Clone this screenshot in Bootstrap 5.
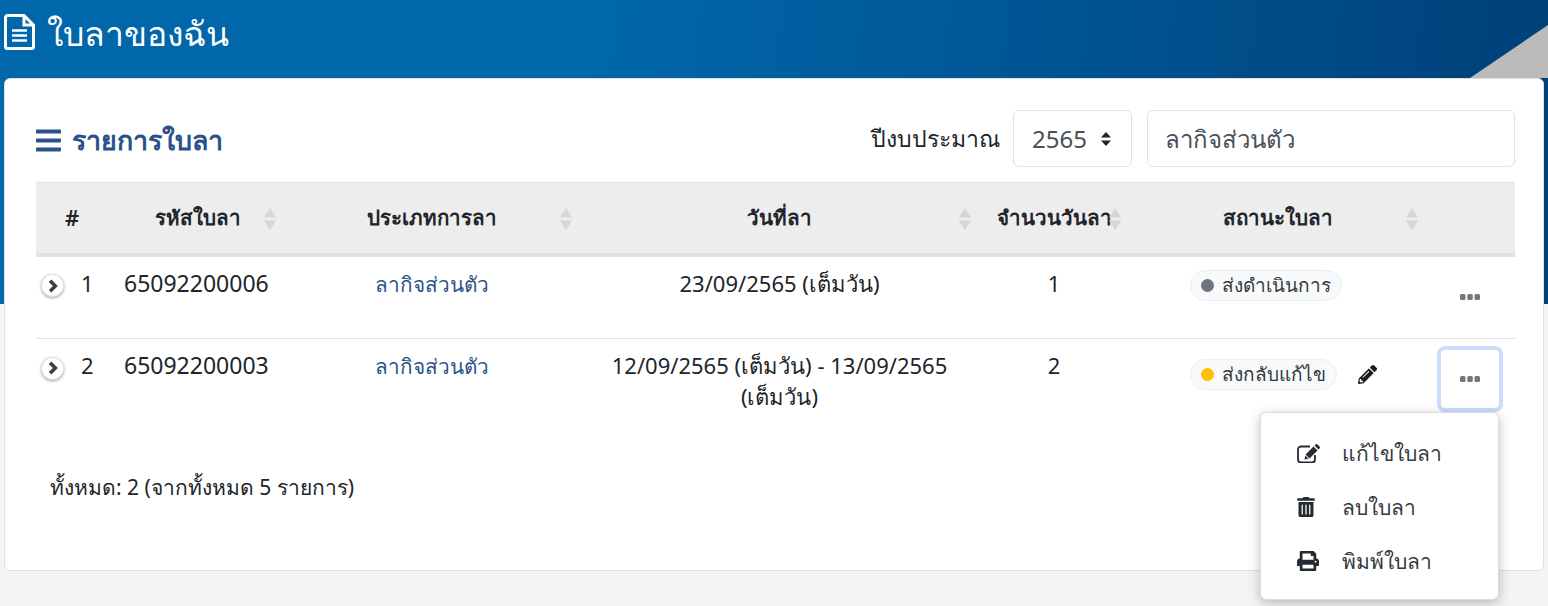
<!DOCTYPE html>
<html lang="th">
<head>
    <meta charset="UTF-8">
    <meta name="viewport" content="width=device-width, initial-scale=1.0">
    <title>ใบลาของฉัน</title>
    <link href="https://cdn.jsdelivr.net/npm/bootstrap@5.3.0/dist/css/bootstrap.min.css" rel="stylesheet">
    <style>
        body {
            background-color: #f3f4f6;
            font-family: "Noto Sans", "Open Sans", sans-serif;
            font-size: 22px;
            color: #212529;
            min-height: 606px;
        }
        .top-band {
            height: 304px;
            padding: 13px 4px 0;
            background: linear-gradient(98deg, #0067ab 0%, #0067ab 38%, #003f77 100%);
            color: #fff;
            position: relative;
        }
        .top-band::after {
            content: "";
            position: absolute;
            top: 25px;
            right: 0;
            width: 78px;
            height: 53px;
            background: #bbbbbb;
            clip-path: polygon(100% 0, 100% 100%, 0 100%);
        }
        .page-title {
            font-size: 33.7px;
            font-weight: 400;
            line-height: 36px;
            margin: 0;
        }
        .page-title svg { width: 31px; height: 36px; margin-right: 12px; }
        .page-title span { padding-top: 2px; }
        .main-card {
            margin: -226px 4px 0;
            height: 493px;
            padding: 31px 28px 0 31px;
            border-radius: 6px;
            border-color: #dfdfdf;
        }
        .list-title {
            font-size: 26.8px;
            font-weight: 600;
            color: #2a5288;
            margin: 4px 0 0;
        }
        .list-title svg { width: 25px; height: 29px; fill: #2a5288; margin-right: 11px; }
        .year-label { margin-right: 13px; font-size: 23px; }
        .year-select {
            width: 119px;
            height: 57px;
            font-size: 24px;
            padding: 0 18px;
            color: #495057;
            border-radius: 6px;
            margin-right: 15px;
            display: flex;
            align-items: center;
            justify-content: space-between;
        }
        .year-select svg { width: 14px; height: 16px; fill: #212529; }
        .search-box {
            width: 368px;
            height: 57px;
            font-size: 24px;
            padding: 0 17px;
            color: #495057;
            border-radius: 6px;
        }
        .leave-table {
            table-layout: fixed;
            width: 1479px;
            margin: 15px 0 0;
        }
        .leave-table th {
            height: 72px;
            background: #ededee;
            border-top: 1px solid #e2e2e2;
            border-bottom: 4px solid #dee2e6;
            font-size: 20.5px;
            font-weight: 600;
            text-align: center;
            vertical-align: middle;
            padding: 0 8px 0 16px;
            position: relative;
            white-space: nowrap;
        }
        .leave-table th.head-no { padding: 0; font-size: 22px; }
        .leave-table td {
            padding: 11px 8px 0 16px;
            vertical-align: top;
            border-bottom: 1px solid #dee2e6;
            line-height: 31px;
            text-align: center;
        }
        .leave-table tr.row-one td { height: 84px; }
        .leave-table tr.row-two td { height: 90px; border-bottom: 0; }
        .leave-table a { color: #2a5288; text-decoration: none; font-size: 20.7px; }
        .sort-mark {
            position: absolute;
            right: 4px;
            top: 25px;
            width: 12px;
            height: 22px;
            fill: #d6d6d6;
        }
        .leave-table td.cell-no {
            padding: 11px 0 0 5px;
            text-align: left;
        }
        .expand-btn {
            width: 23px;
            height: 23px;
            border-radius: 50%;
            background: #fff;
            border: 1px solid #e3e3e3;
            box-shadow: 0 1px 3px rgba(0, 0, 0, .35);
            display: inline-flex;
            align-items: center;
            justify-content: center;
            padding: 0;
            margin-right: 17px;
            vertical-align: -1px;
        }
        .expand-btn svg { width: 12px; height: 14px; }
        .leave-table td.cell-code { text-align: left; font-size: 23px; }
        .leave-table td.cell-status { text-align: left; padding-left: 65px; padding-right: 0; }
        .leave-table tr.row-two td.cell-status { padding-top: 20px; }
        .status-pill {
            display: inline-flex;
            align-items: center;
            height: 31px;
            padding: 0 10px;
            background: #f8f9fa;
            border: 1px solid #eeeeee;
            border-radius: 16px;
            font-size: 19px;
            line-height: 1;
            color: #343a40;
            white-space: nowrap;
        }
        .status-dot {
            width: 13px;
            height: 13px;
            border-radius: 50%;
            margin-right: 8px;
        }
        .dot-grey { background: #6c757d; }
        .dot-amber { background: #ffc107; }
        .edit-pencil { width: 19px; height: 19px; fill: #1b1b1b; margin-left: 21px; }
        .leave-table td.cell-more { padding: 0; position: relative; text-align: left; }
        .more-btn {
            width: 62px;
            height: 62px;
            display: inline-flex;
            align-items: center;
            justify-content: center;
            padding: 0;
            border: 2px solid transparent;
            border-radius: 6px;
            background: #fff;
            margin: 9px 0 0 17px;
        }
        .more-btn svg { width: 20px; height: 6px; fill: #777; }
        .row-two .more-btn {
            border-color: #c9defa;
            box-shadow: 0 0 0 2px #c9defa;
        }
        .more-menu {
            position: absolute;
            top: 73px;
            right: 16px;
            left: auto;
            width: 239px;
            height: 188px;
            padding: 13px 0;
            border-radius: 6px;
            border-color: #dcdcdc;
            box-shadow: 0 3px 12px rgba(0, 0, 0, .25);
            z-index: 5;
        }
        .more-menu .dropdown-item {
            display: flex;
            align-items: center;
            height: 54px;
            padding: 0 0 0 36px;
            font-size: 21px;
            color: #343a40;
        }
        .menu-icon { width: 45px; flex: none; }
        .menu-icon svg { fill: #262b33; display: block; }
        .icon-edit { width: 24px; height: 19px; }
        .icon-trash { width: 18px; height: 20px; }
        .icon-print { width: 22px; height: 20px; }
        .summary-line { margin: 43px 0 0 14px; font-size: 21px; line-height: 30px; }
    </style>
</head>
<body>

    <header class="top-band">
        <h1 class="page-title d-flex align-items-center">
            <svg viewBox="0 0 31 36" fill="none" stroke="#fff" stroke-width="3"><path d="M20 1.500H3.500a2 2 0 0 0-2 2v29a2 2 0 0 0 2 2h24a2 2 0 0 0 2-2V11L20 1.500zV11h9.500"/><path d="M8 16.500h15M8 21.500h15M8 26.500h15" stroke-width="2.500"/></svg>
            <span>ใบลาของฉัน</span>
        </h1>
    </header>

    <main class="card main-card position-relative">
        <div class="d-flex align-items-center justify-content-between">
            <h2 class="list-title d-flex align-items-center">
                <svg viewBox="0 0 448 512"><path d="M16 132h416c8.837 0 16-7.163 16-16V76c0-8.837-7.163-16-16-16H16C7.163 60 0 67.163 0 76v40c0 8.837 7.163 16 16 16zm0 160h416c8.837 0 16-7.163 16-16v-40c0-8.837-7.163-16-16-16H16c-8.837 0-16 7.163-16 16v40c0 8.837 7.163 16 16 16zm0 160h416c8.837 0 16-7.163 16-16v-40c0-8.837-7.163-16-16-16H16c-8.837 0-16 7.163-16 16v40c0 8.837 7.163 16 16 16z"/></svg>
                รายการใบลา
            </h2>
            <div class="d-flex align-items-center">
                <span class="year-label">ปีงบประมาณ</span>
                <div class="form-control year-select">
                    <span>2565</span>
                    <svg viewBox="0 0 14 16"><path d="M7 1l5 5.500H2zM7 15L2 9.500h10z"/></svg>
                </div>
                <div class="form-control search-box d-flex align-items-center">ลากิจส่วนตัว</div>
            </div>
        </div>

        <table class="leave-table">
            <colgroup>
                <col style="width:72px"><col style="width:172px"><col style="width:296px"><col style="width:399px"><col style="width:150px"><col style="width:297px"><col style="width:93px">
            </colgroup>
            <thead>
                <tr>
                    <th class="head-no">#</th>
                    <th>รหัสใบลา <svg class="sort-mark" viewBox="0 0 12 22"><path d="M6 0l6 9.500H0zM6 22L0 12.500h12z"/></svg></th>
                    <th>ประเภทการลา <svg class="sort-mark" viewBox="0 0 12 22"><path d="M6 0l6 9.500H0zM6 22L0 12.500h12z"/></svg></th>
                    <th>วันที่ลา <svg class="sort-mark" viewBox="0 0 12 22"><path d="M6 0l6 9.500H0zM6 22L0 12.500h12z"/></svg></th>
                    <th>จำนวนวันลา <svg class="sort-mark" viewBox="0 0 12 22"><path d="M6 0l6 9.500H0zM6 22L0 12.500h12z"/></svg></th>
                    <th>สถานะใบลา <svg class="sort-mark" viewBox="0 0 12 22"><path d="M6 0l6 9.500H0zM6 22L0 12.500h12z"/></svg></th>
                    <th></th>
                </tr>
            </thead>
            <tbody>
                <tr class="row-one">
                    <td class="cell-no"><button class="expand-btn"><svg viewBox="0 0 10 12"><path d="M2.500 1.500L7 6l-4.500 4.500" fill="none" stroke="#3d3d3d" stroke-width="3"/></svg></button>1</td>
                    <td class="cell-code">65092200006</td>
                    <td><a href="#">ลากิจส่วนตัว</a></td>
                    <td>23/09/2565 <span class="text-nowrap">(เต็มวัน)</span></td>
                    <td>1</td>
                    <td class="cell-status"><span class="status-pill"><span class="status-dot dot-grey"></span>ส่งดำเนินการ</span></td>
                    <td class="cell-more"><button class="more-btn"><svg viewBox="0 0 20 6"><rect width="5.500" height="6" rx="1.500"/><rect x="7.300" width="5.500" height="6" rx="1.500"/><rect x="14.500" width="5.500" height="6" rx="1.500"/></svg></button></td>
                </tr>
                <tr class="row-two">
                    <td class="cell-no"><button class="expand-btn"><svg viewBox="0 0 10 12"><path d="M2.500 1.500L7 6l-4.500 4.500" fill="none" stroke="#3d3d3d" stroke-width="3"/></svg></button>2</td>
                    <td class="cell-code">65092200003</td>
                    <td><a href="#">ลากิจส่วนตัว</a></td>
                    <td>12/09/2565 <span class="text-nowrap">(เต็มวัน)</span> - 13/09/2565 <span class="text-nowrap">(เต็มวัน)</span></td>
                    <td>2</td>
                    <td class="cell-status">
                        <div class="d-flex align-items-center">
                            <span class="status-pill"><span class="status-dot dot-amber"></span>ส่งกลับแก้ไข</span>
                            <svg class="edit-pencil" viewBox="0 0 512 512"><path d="M497.900 142.100l-46.100 46.100c-4.700 4.700-12.300 4.700-17 0l-111-111c-4.700-4.700-4.700-12.300 0-17l46.100-46.100c18.700-18.700 49.100-18.700 67.900 0l60.100 60.100c18.800 18.700 18.800 49.100 0 67.900zM284.200 99.800L21.600 362.400.4 483.900c-2.900 16.400 11.400 30.600 27.800 27.800l121.500-21.300 262.600-262.600c4.700-4.700 4.700-12.300 0-17l-111-111c-4.800-4.700-12.400-4.700-17.100 0zM124.100 339.900c-5.500-5.500-5.500-14.300 0-19.800l154-154c5.500-5.500 14.300-5.500 19.800 0s5.500 14.300 0 19.800l-154 154c-5.500 5.500-14.300 5.500-19.800 0zM88 424h48v36.300l-64.500 11.300-31.100-31.100L51.700 376H88v48z"/></svg>
                        </div>
                    </td>
                    <td class="cell-more">
                        <button class="more-btn"><svg viewBox="0 0 20 6"><rect width="5.500" height="6" rx="1.500"/><rect x="7.300" width="5.500" height="6" rx="1.500"/><rect x="14.500" width="5.500" height="6" rx="1.500"/></svg></button>
                        <div class="dropdown-menu show more-menu">
                            <a class="dropdown-item" href="#"><span class="menu-icon"><svg class="icon-edit" viewBox="0 0 24 19"><path d="M13 2.500H4a3 3 0 0 0-3 3v10a3 3 0 0 0 3 3h11a3 3 0 0 0 3-3V11" fill="none" stroke="#262b33" stroke-width="1.800"/><path d="M8.500 10.500l8-8 4 4-8 8zM7.500 15.500l.8-4 3.200 3.200zM17.500 1.500l1-1a1.500 1.500 0 0 1 2 0l2 2a1.500 1.500 0 0 1 0 2l-1 1z"/></svg></span>แก้ไขใบลา</a>
                            <a class="dropdown-item" href="#"><span class="menu-icon"><svg class="icon-trash" viewBox="0 0 448 512"><path d="M32 464a48 48 0 0 0 48 48h288a48 48 0 0 0 48-48V128H32zm272-256a16 16 0 0 1 32 0v224a16 16 0 0 1-32 0zm-96 0a16 16 0 0 1 32 0v224a16 16 0 0 1-32 0zm-96 0a16 16 0 0 1 32 0v224a16 16 0 0 1-32 0zM432 32H312l-9.400-18.700A24 24 0 0 0 281.100 0H166.800a23.720 23.720 0 0 0-21.400 13.300L136 32H16A16 16 0 0 0 0 48v32a16 16 0 0 0 16 16h416a16 16 0 0 0 16-16V48a16 16 0 0 0-16-16z"/></svg></span>ลบใบลา</a>
                            <a class="dropdown-item" href="#"><span class="menu-icon"><svg class="icon-print" viewBox="0 0 512 512" preserveAspectRatio="none"><path d="M448 192V77.250c0-8.490-3.370-16.620-9.370-22.630L393.370 9.370c-6-6-14.140-9.370-22.630-9.370H96C78.330 0 64 14.330 64 32v160c-35.350 0-64 28.650-64 64v112c0 8.840 7.160 16 16 16h48v96c0 17.670 14.330 32 32 32h320c17.670 0 32-14.330 32-32v-96h48c8.840 0 16-7.160 16-16V256c0-35.350-28.650-64-64-64zm-64 256H128v-96h256v96zm0-224H128V64h192v48c0 8.840 7.160 16 16 16h48v96zm48 72c-13.250 0-24-10.750-24-24 0-13.260 10.750-24 24-24s24 10.740 24 24c0 13.250-10.750 24-24 24z"/></svg></span>พิมพ์ใบลา</a>
                        </div>
                    </td>
                </tr>
            </tbody>
        </table>

        <p class="summary-line">ทั้งหมด: 2 (จากทั้งหมด 5 รายการ)</p>
    </main>

    <script src="https://cdn.jsdelivr.net/npm/bootstrap@5.3.0/dist/js/bootstrap.bundle.min.js"></script>
</body>
</html>
